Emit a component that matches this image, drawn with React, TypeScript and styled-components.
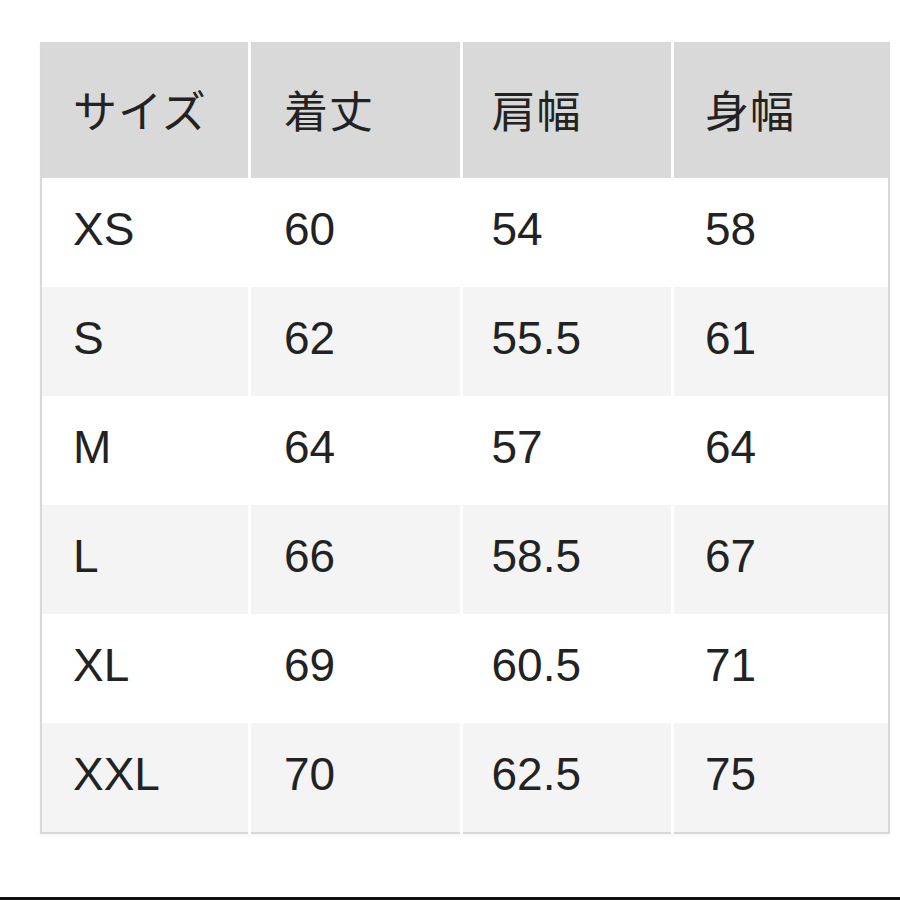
import styled, { createGlobalStyle } from 'styled-components';

const GlobalStyle = createGlobalStyle`
  html, body {
    margin: 0;
    padding: 0;
    background: #ffffff;
  }
  body {
    font-family: "Liberation Sans", "Noto Sans CJK JP", sans-serif;
    color: #222222;
  }
`

const Page = styled.div`
  width: 900px;
  height: 900px;
  display: flex;
  flex-direction: column;
  box-sizing: border-box;
  padding: 42px 0 0 40px;
`

const SizeTable = styled.table`
  width: 850px;
  border-collapse: collapse;
  table-layout: fixed;
  border: 2px solid #d8d8d8;
  box-shadow: 0 1px 3px rgba(0, 0, 0, 0.06);
`

const Col = styled.col<{ $w: number }>`
  width: ${p => p.$w}px;
`

const HeadCell = styled.th<{ $pad: number; $first?: boolean }>`
  height: 130px;
  background: #d9d9d9;
  text-align: left;
  font-weight: 400;
  font-size: 44px;
  font-family: "Noto Sans CJK JP", "Liberation Sans", sans-serif;
  letter-spacing: 1px;
  padding: 0 0 4px ${p => p.$pad}px;
  border-left: ${p => (p.$first ? 'none' : '3px solid #ffffff')};
  border-right: ${p => (p.$first ? '2px solid #d9d9d9' : 'none')};
`

const Row = styled.tr<{ $shade: boolean }>`
  background: ${p => (p.$shade ? '#f4f4f4' : '#ffffff')};
`

const Cell = styled.td<{ $pad: number; $first?: boolean }>`
  height: 102px;
  padding: 0 0 7px ${p => p.$pad}px;
  font-size: 46px;
  font-family: "Liberation Sans", "Noto Sans CJK JP", sans-serif;
  line-height: 1;
  vertical-align: middle;
  border-left: ${p => (p.$first ? 'none' : '3px solid #ffffff')};
  border-right: ${p => (p.$first ? '2px solid #d4d4d4' : 'none')};
`

const BottomRule = styled.div`
  margin: auto 0 0 -40px;
  height: 3px;
  width: 900px;
  background: #111111;
`

const widths = [208, 212, 210, 216]
const pads = [31, 33, 28, 31]

const headers = ['サイズ', '着丈', '肩幅', '身幅']

const rows = [
  ['XS', '60', '54', '58'],
  ['S', '62', '55.5', '61'],
  ['M', '64', '57', '64'],
  ['L', '66', '58.5', '67'],
  ['XL', '69', '60.5', '71'],
  ['XXL', '70', '62.5', '75'],
]

export default function App() {
  return (
    <>
      <GlobalStyle />
      <Page>
        <SizeTable>
          <colgroup>
            {widths.map((w, i) => (
              <Col key={i} $w={w} />
            ))}
          </colgroup>
          <thead>
            <tr>
              {headers.map((h, i) => (
                <HeadCell key={h} $pad={pads[i]} $first={i === 0}>{h}</HeadCell>
              ))}
            </tr>
          </thead>
          <tbody>
            {rows.map((r, ri) => (
              <Row key={r[0]} $shade={ri % 2 === 1}>
                {r.map((v, ci) => (
                  <Cell key={ci} $pad={pads[ci]} $first={ci === 0}>{v}</Cell>
                ))}
              </Row>
            ))}
          </tbody>
        </SizeTable>
        <BottomRule />
      </Page>
    </>
  )
}
